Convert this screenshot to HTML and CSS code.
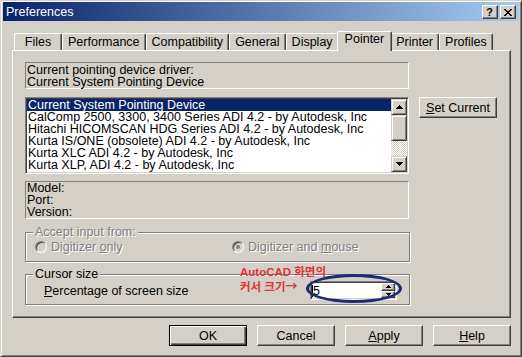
FILE: index.html
```html
<!DOCTYPE html>
<html lang="ko">
<head>
  <meta charset="UTF-8">
  <title>Preferences</title>
  <link rel="stylesheet" href="styles.css">
</head>
<body>
  <div class="window">
    <!-- Title bar -->
    <div class="titlebar">
      <span class="title">Preferences</span>
      <div class="caption-btns">
        <span class="cap-btn help">?</span>
        <span class="cap-btn">
          <svg width="8" height="7" viewBox="0 0 8 7"><path d="M0 0h2v1H0zM6 0h2v1H6zM1 1h2v1H1zM5 1h2v1H5zM2 2h4v1H2zM3 3h2v1H3zM2 4h4v1H2zM1 5h2v1H1zM5 5h2v1H5zM0 6h2v1H0zM6 6h2v1H6z"/></svg>
        </span>
      </div>
    </div>

    <!-- Tabs -->
    <div class="tabs">
      <div class="tab">Files</div>
      <div class="tab">Performance</div>
      <div class="tab">Compatibility</div>
      <div class="tab">General</div>
      <div class="tab">Display</div>
      <div class="tab active">Pointer</div>
      <div class="tab">Printer</div>
      <div class="tab">Profiles</div>
    </div>

    <!-- Pointer page -->
    <div class="panel">
      <div class="static driver">Current pointing device driver:<br>Current System Pointing Device</div>

      <div class="listbox gap-list">
        <ul class="list-items">
          <li class="selected">Current System Pointing Device</li>
          <li>CalComp 2500, 3300, 3400 Series ADI 4.2 - by Autodesk, Inc</li>
          <li>Hitachi HICOMSCAN HDG Series ADI 4.2 - by Autodesk, Inc</li>
          <li>Kurta IS/ONE (obsolete) ADI 4.2 - by Autodesk, Inc</li>
          <li>Kurta XLC ADI 4.2 - by Autodesk, Inc</li>
          <li>Kurta XLP, ADI 4.2 - by Autodesk, Inc</li>
          <li>Summagraphics MicroGrid v1.1 (Series II or later) ADI 4.2 - by Autodesk</li>
        </ul>
        <div class="scrollbar">
          <div class="sb-btn">
            <svg width="7" height="4" viewBox="0 0 7 4"><path d="M3 0h1v1h1v1h1v1h1v1H0V3h1V2h1V1h1z"/></svg>
          </div>
          <div class="sb-thumb"></div>
          <div class="sb-track"></div>
          <div class="sb-btn">
            <svg width="7" height="4" viewBox="0 0 7 4"><path d="M0 0h7v1H6v1H5v1H4v1H3V3H2V2H1V1H0z"/></svg>
          </div>
        </div>
      </div>

      <button class="btn set-current gap-list"><u>S</u>et Current</button>

      <div class="static model">Model:<br>Port:<br>Version:</div>

      <div class="group accept disabled">
        <div class="legend">Accept input from:</div>
        <div class="radios">
          <label class="radio"><span class="radio-dot"></span><span>Digitizer <u>o</u>nly</span></label>
          <label class="radio"><span class="radio-dot checked"></span><span>Digitizer and <u>m</u>ouse</span></label>
        </div>
      </div>

      <div class="group cursor">
        <div class="legend">Cursor size</div>
        <div class="cursor-row">
          <span><u>P</u>ercentage of screen size</span>
          <div class="spin-edit">
            <span class="edit-value"><span class="caret"></span>5</span>
            <div class="spin">
              <span class="spin-btn"><svg width="5" height="3" viewBox="0 0 5 3"><path d="M2 0h1v1h1v1h1v1H0V2h1V1h1z"/></svg></span>
              <span class="spin-btn"><svg width="5" height="3" viewBox="0 0 5 3"><path d="M0 0h5v1H4v1H3v1H2V2H1V1H0z"/></svg></span>
            </div>
          </div>
        </div>
      </div>

      <!-- annotation drawn on top of the screenshot -->
      <div class="note">AutoCAD 화면의<br>커서 크기<span class="arrow">→</span></div>
      <div class="ring"></div>
    </div>

    <!-- Dialog buttons -->
    <div class="buttons">
      <button class="btn default">OK</button>
      <button class="btn">Cancel</button>
      <button class="btn"><u>A</u>pply</button>
      <button class="btn"><u>H</u>elp</button>
    </div>
  </div>
</body>
</html>
```

FILE: styles.css
```css
body {
  margin: 0;
  background-color: #d4d0c8;
  font-family: "Liberation Sans", Arial, sans-serif;
  font-size: 12.5px;
  line-height: 12px;
  color: #000;
}

u {
  text-underline-offset: 1px;
}

/* Window frame */
.window {
  width: 522px;
  height: 357px;
  box-sizing: border-box;
  overflow: hidden;
  border: 1px solid;
  border-color: #d4d0c8 #404040 #404040 #d4d0c8;
  box-shadow: inset 1px 1px #fff, inset -1px -1px #808080;
  padding: 1px 2px 2px;
}

.titlebar {
  height: 19px;
  display: flex;
  align-items: center;
  justify-content: space-between;
  padding: 1px 3px 0;
  box-sizing: border-box;
  background: linear-gradient(to right, #0a246a, #a6caf0);
  color: #fff;
}

.title {
  line-height: 14px;
}

.caption-btns {
  display: flex;
  gap: 2px;
}

.cap-btn {
  width: 16px;
  height: 14px;
  box-sizing: border-box;
  display: flex;
  align-items: center;
  justify-content: center;
  background: #d4d0c8;
  border: 1px solid;
  border-color: #fff #404040 #404040 #fff;
  box-shadow: inset -1px -1px #808080;
  color: #000;
}

.cap-btn.help {
  font-weight: bold;
  font-size: 11px;
  line-height: 11px;
  padding-right: 1px;
}

/* Tabs */
.tabs {
  display: flex;
  align-items: flex-end;
  height: 20px;
  margin: 10px 0 0 11px;
  position: relative;
  z-index: 1;
}

.tab {
  height: 17px;
  box-sizing: border-box;
  min-width: 48px;
  margin-bottom: 1px;
  padding: 2px 5px 0;
  text-align: center;
  white-space: nowrap;
  background: #d4d0c8;
  border: 1px solid;
  border-color: #fff #404040 transparent #fff;
  border-bottom: 0;
  border-radius: 2px 2px 0 0;
  box-shadow: inset -1px 0 #808080;
}

.tab.active {
  height: 20px;
  margin: 0 -2px;
  padding: 1px 7px 0;
  position: relative;
  z-index: 2;
}

/* Tab page */
.panel {
  position: relative;
  margin: -1px 8px 0 9px;
  padding: 11px 12px 11px;
  border: 1px solid;
  border-color: #fff #404040 #404040 #fff;
  box-shadow: inset -1px -1px #808080;
  display: grid;
  grid-template-columns: 384px 78px;
  column-gap: 10px;
  align-items: start;
}

.static,
.listbox,
.group {
  grid-column: 1;
}

.static {
  border: 1px solid;
  border-color: #808080 #fff #fff #808080;
  white-space: nowrap;
}

.driver {
  padding: 1px 1px 0;
}

.model {
  margin-top: 7px;
  padding: 0 1px;
}

.gap-list {
  margin-top: 8px;
}

/* List box */
.listbox {
  height: 77px;
  box-sizing: border-box;
  display: flex;
  padding: 1px;
  border: 1px solid;
  border-color: #808080 #fff #fff #808080;
  box-shadow: inset 1px 1px #404040, inset -1px -1px #d4d0c8;
}

.list-items {
  flex: 1;
  margin: 0;
  padding: 0;
  list-style: none;
  overflow: hidden;
  background: #fff;
}

.list-items li {
  height: 12px;
  padding-left: 1px;
  white-space: nowrap;
}

.list-items li.selected {
  background: #0a246a;
  color: #fff;
}

.scrollbar {
  width: 16px;
  display: flex;
  flex-direction: column;
}

.sb-btn,
.sb-thumb {
  box-sizing: border-box;
  background: #d4d0c8;
  border: 1px solid;
  border-color: #d4d0c8 #404040 #404040 #d4d0c8;
  box-shadow: inset 1px 1px #fff, inset -1px -1px #808080;
}

.sb-btn {
  height: 16px;
  display: flex;
  align-items: center;
  justify-content: center;
}

.sb-thumb {
  height: 26px;
}

.sb-track {
  flex: 1;
  background: repeating-conic-gradient(#fff 0 25%, #d4d0c8 0 50%) 0 0 / 2px 2px;
}

/* Buttons */
.btn {
  width: 78px;
  height: 21px;
  padding: 0;
  font: inherit;
  line-height: 12px;
  color: #000;
  background: #d4d0c8;
  border: 1px solid;
  border-color: #fff #404040 #404040 #fff;
  box-shadow: inset -1px -1px #808080;
}

.btn.default {
  border-color: #000;
  box-shadow: inset 1px 1px #fff, inset -1px -1px #404040, inset -2px -2px #808080;
}

.set-current {
  grid-column: 2;
  grid-row: 2;
}

/* Group boxes */
.group {
  position: relative;
}

.group::before {
  content: "";
  position: absolute;
  top: 6px;
  left: 0;
  right: -1px;
  bottom: 1px;
  border: 1px solid #808080;
  box-shadow: 1px 1px 0 #fff, inset 1px 1px 0 #fff;
}

.legend {
  position: relative;
  width: max-content;
  margin-left: 8px;
  padding: 0 2px;
  line-height: 13px;
  background: #d4d0c8;
}

.disabled .legend,
.disabled .radio {
  color: #808080;
  text-shadow: 1px 1px 0 #fff;
}

.accept {
  margin-top: 7px;
  padding-bottom: 8px;
}

.radios {
  position: relative;
  display: grid;
  grid-template-columns: 197px auto;
  height: 16px;
  padding-left: 10px;
}

.radio {
  display: flex;
  align-items: center;
  gap: 4px;
}

.radio-dot {
  width: 12px;
  height: 12px;
  box-sizing: border-box;
  border-radius: 50%;
  border: 1px solid;
  border-color: #808080 #fff #fff #808080;
  box-shadow: inset 1px 1px #404040, inset -1px -1px #d4d0c8;
  background: #d4d0c8;
  display: flex;
  align-items: center;
  justify-content: center;
}

.radio-dot.checked::after {
  content: "";
  width: 4px;
  height: 4px;
  border-radius: 50%;
  background: #808080;
}

.cursor {
  margin-top: 5px;
  padding-bottom: 6px;
}

.cursor-row {
  position: relative;
  height: 19px;
  display: flex;
  align-items: center;
  justify-content: space-between;
  padding: 0 12px 0 19px;
}

.spin-edit {
  width: 87px;
  height: 19px;
  box-sizing: border-box;
  display: flex;
  padding: 1px;
  border: 1px solid;
  border-color: #808080 #fff #fff #808080;
  box-shadow: inset 1px 1px #404040, inset -1px -1px #d4d0c8;
}

.edit-value {
  flex: 1;
  display: flex;
  align-items: center;
  background: #fff;
}

.caret {
  width: 1px;
  height: 12px;
  background: #000;
}

.spin {
  width: 14px;
  display: flex;
  flex-direction: column;
}

.spin-btn {
  flex: 1;
  display: flex;
  align-items: center;
  justify-content: center;
  background: #d4d0c8;
  border: 1px solid;
  border-color: #fff #404040 #404040 #fff;
  box-shadow: inset -1px -1px #808080;
}

/* Red note and circle over the screenshot */
.note {
  position: absolute;
  left: 227px;
  top: 214px;
  font-family: "Liberation Sans", "Noto Sans CJK KR", sans-serif;
  font-weight: bold;
  font-size: 11.5px;
  line-height: 14px;
  color: #e03236;
  white-space: nowrap;
}

.note .arrow {
  font-family: "Noto Sans CJK KR", sans-serif;
  font-size: 12px;
}

.ring {
  position: absolute;
  left: 293px;
  top: 223px;
  width: 96px;
  height: 29px;
  box-sizing: border-box;
  border: 3px solid #1e2a78;
  border-radius: 50%;
}

/* Dialog buttons */
.buttons {
  display: flex;
  justify-content: flex-end;
  gap: 10px;
  margin: 7px 8px 0 0;
}
```
